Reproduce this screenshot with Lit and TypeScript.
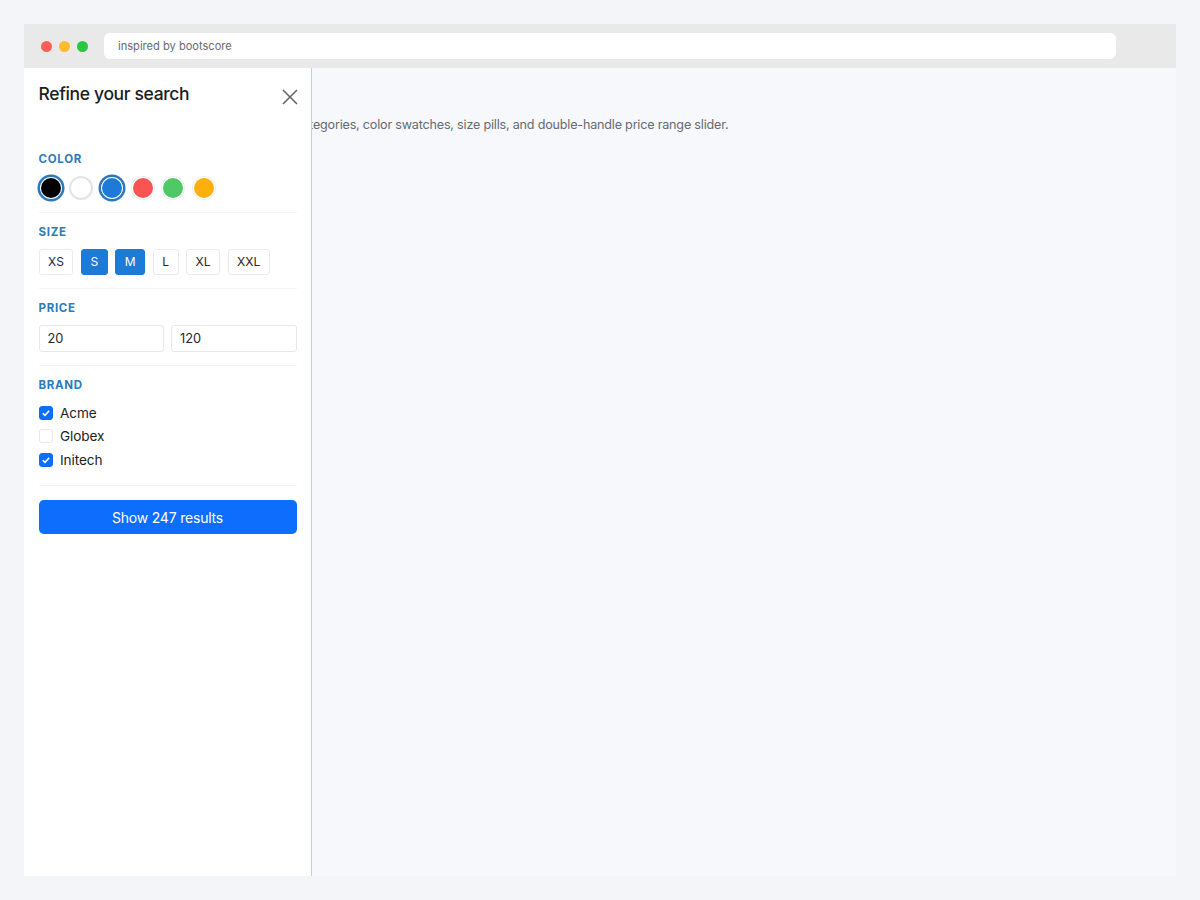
import {LitElement, html, css} from 'lit'
import {customElement} from 'lit/decorators.js'

const swatches = [
  {color: '#000000', on: true},
  {color: '#ffffff', on: false, plain: true},
  {color: '#1d7ad6', on: true},
  {color: '#f95353', on: false},
  {color: '#4fc866', on: false},
  {color: '#ffaf0b', on: false},
]
const sizes = [
  {label: 'XS', on: false},
  {label: 'S', on: true},
  {label: 'M', on: true},
  {label: 'L', on: false},
  {label: 'XL', on: false},
  {label: 'XXL', on: false},
]
const brands = [
  {label: 'Acme', on: true},
  {label: 'Globex', on: false},
  {label: 'Initech', on: true},
]

@customElement('app-root')
export class AppRoot extends LitElement {
  static styles = css`
    :host {
      display: block;
      height: 900px;
      box-sizing: border-box;
      padding: 24px;
      background: #f4f5f8;
      font-family: Inter, "Liberation Sans", sans-serif;
      color: #1a1d21;
    }
    .frame {
      height: 852px;
      display: flex;
      flex-direction: column;
      background: #f7f8fc;
    }
    .chrome {
      height: 44px;
      flex: none;
      display: flex;
      align-items: center;
      padding-left: 16.5px;
      background: #e9e9e9;
    }
    .dot {
      width: 11px;
      height: 11px;
      border-radius: 50%;
      margin-right: 7px;
    }
    .url {
      width: 1012px;
      height: 26px;
      margin-left: 9.5px;
      padding-left: 14px;
      box-sizing: border-box;
      display: flex;
      align-items: center;
      border-radius: 6px;
      background: #fff;
      font-size: 11.1px;
      color: #666a70;
    }
    .body {
      position: relative;
      flex: 1;
    }
    .lede {
      margin: 0;
      padding: 47px 0 0 89px;
      font-size: 12.6px;
      line-height: 20px;
      letter-spacing: -0.2px;
      color: #666a70;
    }
    .panel {
      position: absolute;
      left: 0;
      top: 0;
      bottom: 0;
      width: 288px;
      box-sizing: border-box;
      padding: 0 14.5px;
      background: #fff;
      border-right: 1px solid #b9d3ea;
    }
    .head {
      height: 72px;
      position: relative;
    }
    h2 {
      margin: 0;
      padding-top: 14px;
      font-size: 17.5px;
      line-height: 24px;
      font-weight: 500;
      letter-spacing: -0.35px;
    }
    .close {
      position: absolute;
      right: -2px;
      top: 20px;
      width: 18px;
      height: 18px;
    }
    .group {
      padding-bottom: 13px;
      border-bottom: 1px solid #f3f4f6;
      margin-bottom: 12px;
    }
    .group.color {
      padding-top: 12px;
      padding-bottom: 12.5px;
    }
    .group.price-group {
      padding-bottom: 12.5px;
    }
    .group.brand-group {
      padding-bottom: 13px;
      margin-bottom: 14.3px;
    }
    .label {
      font-size: 11.5px;
      line-height: 14px;
      font-weight: 700;
      letter-spacing: 0.7px;
      color: #2b7bbd;
      margin-bottom: 10px;
    }
    .swatches {
      display: flex;
      gap: 6.7px;
      align-items: center;
    }
    .color .label {
      margin-bottom: 9.5px;
    }
    .swatch {
      width: 24px;
      height: 24px;
      box-sizing: border-box;
      padding: 2px;
      border-radius: 50%;
      background-clip: content-box;
      box-shadow: inset 0 0 0 1px #eeeeee;
    }
    .swatch.plain {
      box-shadow: inset 0 0 0 2px #e2e4e6;
    }
    .swatch.on {
      box-shadow: 0 0 0 1.5px #2a78bd;
    }
    .sizes {
      display: flex;
      gap: 7.4px;
    }
    .size {
      height: 25.5px;
      box-sizing: border-box;
      padding: 0 8.6px;
      display: flex;
      align-items: center;
      border: 1px solid #e9ebee;
      border-radius: 3px;
      font-size: 12px;
      color: #24272b;
      background: #fff;
    }
    .size.on {
      background: #1d7ad6;
      border-color: #1d7ad6;
      color: #fff;
    }
    .prices {
      display: grid;
      grid-template-columns: 1fr 1fr;
      gap: 7px;
    }
    .price {
      height: 27.5px;
      box-sizing: border-box;
      display: flex;
      align-items: center;
      padding-left: 8px;
      border: 1px solid #e6e8eb;
      border-radius: 3px;
      font-size: 12.8px;
      color: #24272b;
    }
    .brand-group .label {
      margin-bottom: 9.5px;
    }
    .brand {
      display: flex;
      align-items: center;
      gap: 7.5px;
      height: 23.6px;
      font-size: 13.6px;
      letter-spacing: -0.1px;
    }
    .check {
      width: 14px;
      height: 14px;
      box-sizing: border-box;
      border-radius: 3px;
      border: 1px solid #e6e8eb;
      display: flex;
      align-items: center;
      justify-content: center;
    }
    .check.on {
      background: #0d6efd;
      border-color: #0d6efd;
    }
    .check svg {
      width: 10px;
      height: 10px;
    }
    .submit {
      height: 34px;
      display: flex;
      align-items: center;
      justify-content: center;
      border-radius: 5px;
      background: #0d6efd;
      color: #fff;
      font-size: 14px;
      letter-spacing: -0.2px;
    }
  `

  render() {
    return html`
      <div class="frame">
        <div class="chrome">
          <span class="dot" style="background:#ff5f57"></span>
          <span class="dot" style="background:#febc2e"></span>
          <span class="dot" style="background:#28c840"></span>
          <div class="url">inspired by bootscore</div>
        </div>
        <div class="body">
          <p class="lede">Sidebar filter panel with nested categories, color swatches, size pills, and double-handle price range slider.</p>
          <aside class="panel">
            <div class="head">
              <h2>Refine your search</h2>
              <svg class="close" viewBox="0 0 18 18" fill="none" stroke="#5f6368" stroke-width="1.5">
                <path d="M2 2l14 14M16 2L2 16"></path>
              </svg>
            </div>
            <div class="group color">
              <div class="label">COLOR</div>
              <div class="swatches">
                ${swatches.map(s => html`
                  <span class="swatch ${s.on ? 'on' : ''} ${s.plain ? 'plain' : ''}" style="background-color:${s.color}"></span>
                `)}
              </div>
            </div>
            <div class="group">
              <div class="label">SIZE</div>
              <div class="sizes">
                ${sizes.map(s => html`<span class="size ${s.on ? 'on' : ''}">${s.label}</span>`)}
              </div>
            </div>
            <div class="group price-group">
              <div class="label">PRICE</div>
              <div class="prices">
                <div class="price">20</div>
                <div class="price">120</div>
              </div>
            </div>
            <div class="group brand-group">
              <div class="label">BRAND</div>
              ${brands.map(b => html`
                <div class="brand">
                  <span class="check ${b.on ? 'on' : ''}">
                    ${b.on ? html`<svg viewBox="0 0 10 10" fill="none" stroke="#fff" stroke-width="1.6"><path d="M1.8 5.2l2.2 2.2 4.2-4.6"></path></svg>` : ''}
                  </span>
                  ${b.label}
                </div>
              `)}
            </div>
            <div class="submit">Show 247 results</div>
          </aside>
        </div>
      </div>
    `
  }
}
